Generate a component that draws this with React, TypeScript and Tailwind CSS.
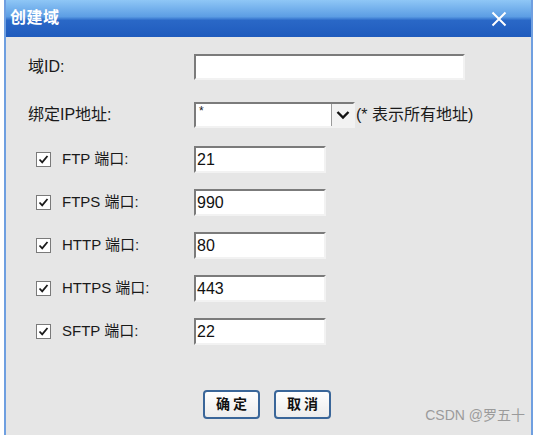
import React from 'react';

const font = { fontFamily: '"Liberation Sans", "Noto Sans CJK SC", sans-serif' };

const Field: React.FC<{ value?: string; className?: string }> = ({ value = '', className = '' }) => (
  <div
    className={`h-[26px] bg-white border-2 border-t-[#7b7b7b] border-l-[#7b7b7b] border-b-[#f2f2f2] border-r-[#f2f2f2] flex items-center pl-[1px] text-[16px] text-[#111] ${className}`}
  >
    {value}
  </div>
);

const Check: React.FC = () => (
  <div className="w-[15px] h-[15px] bg-white border border-[#7a7a7a] flex items-center justify-center">
    <svg width="11" height="11" viewBox="0 0 11 11">
      <path d="M1.5 5.5 L4.2 8.3 L9.5 2" fill="none" stroke="#1a1a1a" strokeWidth="1.8" />
    </svg>
  </div>
);

const ports = [
  { name: 'FTP', port: '21' },
  { name: 'FTPS', port: '990' },
  { name: 'HTTP', port: '80' },
  { name: 'HTTPS', port: '443' },
  { name: 'SFTP', port: '22' },
];

const Button: React.FC<{ label: string }> = ({ label }) => (
  <button className="w-[57px] h-[29px] rounded-[4px] border-2 border-[#3a6699] bg-[linear-gradient(to_bottom,#ffffff,#ececec)] text-[14px] font-bold text-[#111] tracking-[3px] pl-[3px]">
    {label}
  </button>
);

export default function App() {
  return (
    <div className="w-[541px] h-[435px] bg-white flex overflow-hidden relative" style={font}>
      <div className="ml-[4px] w-[529px] h-[435px] border-x-2 border-[#6f9fe0] bg-[#e6e6e6] flex flex-col">
        <div className="h-[37px] bg-[linear-gradient(to_bottom,#8fc7f6_0%,#5c9de4_45%,#2a68c7_55%,#1f5bbd_100%)] flex items-center justify-between pl-[4px] pr-[24px]">
          <span className="text-white text-[16px] font-bold tracking-[0.5px] pb-[2px]">创建域</span>
          <svg width="16" height="16" viewBox="0 0 16 16">
            <path d="M1.5 1.5 L14.5 14.5 M14.5 1.5 L1.5 14.5" stroke="#fff" strokeWidth="2" />
          </svg>
        </div>

        <div className="flex flex-col pl-[22px] pt-[17px] text-[15px] text-[#1a1a1a]">
          <div className="flex items-center h-[26px]">
            <span className="w-[166px] text-[16px]">域ID:</span>
            <Field className="w-[271px]" />
          </div>

          <div className="flex items-center h-[26px] mt-[22px]">
            <span className="w-[166px] text-[16px]">绑定IP地址:</span>
            <div className="w-[161px] h-[26px] bg-white border-2 border-t-[#7b7b7b] border-l-[#7b7b7b] border-b-[#f2f2f2] border-r-[#f2f2f2] flex items-stretch">
              <span className="flex-1 pl-[3px] text-[12px] leading-[14px]">*</span>
              <div className="w-[22px] border-l border-[#9a9a9a] bg-[#f2f2f2] flex items-center justify-center">
                <svg width="14" height="10" viewBox="0 0 14 10">
                  <path d="M1.5 2 L7 7.5 L12.5 2" fill="none" stroke="#111" strokeWidth="2.4" />
                </svg>
              </div>
            </div>
            <span className="ml-[1px] text-[16px]">(* 表示所有地址)</span>
          </div>

          {ports.map((p, i) => (
            <div key={p.name} className={`flex items-center h-[27px] ${i === 0 ? 'mt-[18px]' : 'mt-[16px]'}`}>
              <div className="w-[166px] flex items-center pl-[8px]">
                <Check />
                <span className="ml-[11px]">{p.name} 端口:</span>
              </div>
              <Field value={p.port} className="w-[132px] h-[27px]" />
            </div>
          ))}

          <div className="flex items-center gap-[14px] mt-[45px] pl-[175px]">
            <Button label="确定" />
            <Button label="取消" />
          </div>
        </div>
      </div>
      <span className="absolute right-[16px] bottom-[9px] text-[14px] text-[#9b9b9b]">CSDN @罗五十</span>
    </div>
  );
}
